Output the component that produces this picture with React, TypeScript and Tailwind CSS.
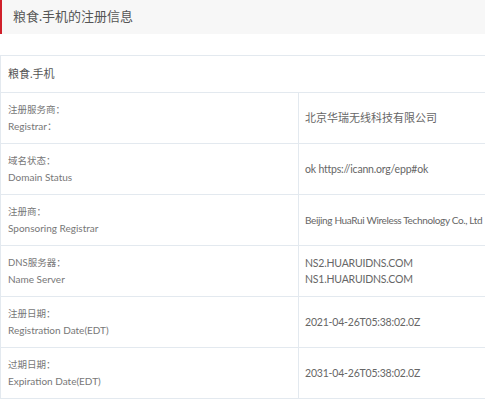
import React from 'react';

const ROWS: { cn: string; en: string; value: string[]; size: string }[] = [
  { cn: '注册服务商：', en: 'Registrar：', value: ['北京华瑞无线科技有限公司'], size: 'text-[11px]' },
  { cn: '域名状态：', en: 'Domain Status', value: ['ok https://icann.org/epp#ok'], size: 'text-[10.5px] tracking-[-0.2px]' },
  {
    cn: '注册商：',
    en: 'Sponsoring Registrar',
    value: ['Beijing HuaRui Wireless Technology Co., Ltd'],
    size: 'text-[10px] tracking-[-0.35px]',
  },
  { cn: 'DNS服务器：', en: 'Name Server', value: ['NS2.HUARUIDNS.COM', 'NS1.HUARUIDNS.COM'], size: 'text-[10.5px] tracking-[-0.2px]' },
  { cn: '注册日期：', en: 'Registration Date(EDT)', value: ['2021-04-26T05:38:02.0Z'], size: 'text-[10.5px] tracking-[-0.2px]' },
  { cn: '过期日期：', en: 'Expiration Date(EDT)', value: ['2031-04-26T05:38:02.0Z'], size: 'text-[10.5px] tracking-[-0.2px]' },
];

export default function App() {
  return (
    <div className="w-[485px] h-[400px] overflow-hidden bg-white text-[#666] font-['Lato','Noto_Sans_CJK_SC',sans-serif]">
      {/* Title bar */}
      <div className="h-[34px] bg-[#f7f7f7] border-l-2 border-[#d0202a] flex items-center pl-[11px] text-[13px] text-[#555]">
        粮食.手机的注册信息
      </div>

      {/* Whois table */}
      <div className="mt-[21px] w-[500px] border-t border-l border-[#e3e9ef]">
        <div className="h-[37px] border-b border-[#e3e9ef] flex items-center pl-[7px] text-[11px] text-[#555]">
          粮食.手机
        </div>
        {ROWS.map((r) => (
          <div key={r.cn} className="grid grid-cols-[298px_1fr] h-[51px] border-b border-[#e3e9ef]">
            <div className="border-r border-[#e3e9ef] flex flex-col justify-center pl-[7px] leading-[17px] text-[#777]">
              <span className="text-[9.5px]">{r.cn}</span>
              <span className="text-[10px]">{r.en}</span>
            </div>
            <div className={`flex flex-col justify-center pl-[6px] leading-[16px] text-[#666] whitespace-nowrap ${r.size}`}>
              {r.value.map((v) => (
                <span key={v}>{v}</span>
              ))}
            </div>
          </div>
        ))}
      </div>
    </div>
  );
}
